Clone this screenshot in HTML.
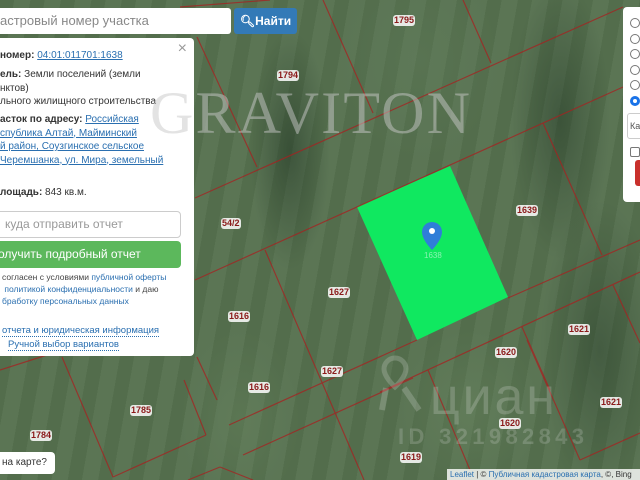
<!DOCTYPE html>
<html><head><meta charset="utf-8"><style>
*{box-sizing:border-box;margin:0;padding:0}
body{width:640px;height:480px;overflow:hidden;position:relative;font-family:"Liberation Sans",sans-serif;background:#4f6a4c}
.map{position:absolute;inset:0;background:
radial-gradient(ellipse 40px 120px at 290px 150px,rgba(25,45,30,.45),transparent),
radial-gradient(ellipse 50px 140px at 560px 120px,rgba(25,45,30,.4),transparent),
radial-gradient(ellipse 60px 90px at 240px 420px,rgba(110,140,100,.3),transparent),
radial-gradient(ellipse 70px 80px at 470px 410px,rgba(110,140,100,.3),transparent),
radial-gradient(ellipse 60px 150px at 600px 350px,rgba(25,45,30,.35),transparent),
radial-gradient(ellipse 80px 100px at 420px 60px,rgba(100,130,95,.3),transparent),
repeating-linear-gradient(100deg,rgba(0,0,0,.04) 0 14px,rgba(255,255,255,.03) 14px 30px),
#56714f}
.lbl{position:absolute;font-size:9px;color:#8b1a1a;background:rgba(255,255,255,.85);border-radius:3px;padding:0 1px;line-height:11px;font-weight:bold}
.panel{position:absolute;left:-10px;top:38px;width:204px;height:318px;background:#fff;border-radius:4px;font-size:10px;color:#333}
a{color:#2a6fb0;text-decoration:underline}
</style></head><body>
<div class="map"></div>
<svg style="position:absolute;left:0;top:0" width="640" height="480">
<polygon points="357,207 450,166 508,297 417,340" fill="#10e860"/>
<g stroke="#a82020" stroke-width="1.2" fill="none" opacity=".75">
<line x1="180" y1="7" x2="270" y2="0"/>
<line x1="197" y1="37" x2="257" y2="167"/>
<line x1="323" y1="0" x2="373" y2="113"/>
<line x1="463" y1="0" x2="491" y2="63"/>
<line x1="195" y1="198" x2="623" y2="7"/>
<line x1="195" y1="280" x2="623" y2="87"/>
<line x1="543" y1="123" x2="602" y2="255"/>
<line x1="508" y1="298" x2="640" y2="240"/>
<line x1="380" y1="392" x2="640" y2="272"/>
<line x1="522" y1="327" x2="550" y2="390"/>
<line x1="613" y1="285" x2="640" y2="343"/>
<line x1="265" y1="250" x2="364" y2="480"/>
<line x1="229" y1="425" x2="417" y2="340"/>
<line x1="243" y1="455" x2="413" y2="378"/>
<line x1="428" y1="370" x2="470" y2="470"/>
<line x1="527" y1="340" x2="580" y2="460"/>
<line x1="580" y1="460" x2="640" y2="433"/>
<line x1="197" y1="357" x2="217" y2="400"/>
<line x1="184" y1="380" x2="206" y2="435"/>
<line x1="62" y1="357" x2="113" y2="477"/>
<line x1="113" y1="477" x2="206" y2="435"/>
<line x1="0" y1="370" x2="47" y2="355"/>
<line x1="188" y1="480" x2="220" y2="467"/>
<line x1="220" y1="467" x2="253" y2="480"/>
</g>
<path d="M432 222a10 10 0 0 1 10 10c0 8-10 18-10 18s-10-10-10-18a10 10 0 0 1 10-10z" fill="#2f7ed8"/>
<circle cx="432" cy="231" r="3" fill="#fff"/>
<text x="424" y="258" font-family="Liberation Sans" font-size="8" fill="rgba(255,255,255,.5)">1638</text>
</svg>
<div class="lbl" style="left:393px;top:15px">1795</div>
<div class="lbl" style="left:277px;top:70px">1794</div>
<div class="lbl" style="left:221px;top:218px">54/2</div>
<div class="lbl" style="left:516px;top:205px">1639</div>
<div class="lbl" style="left:328px;top:287px">1627</div>
<div class="lbl" style="left:228px;top:311px">1616</div>
<div class="lbl" style="left:321px;top:366px">1627</div>
<div class="lbl" style="left:495px;top:347px">1620</div>
<div class="lbl" style="left:499px;top:418px">1620</div>
<div class="lbl" style="left:568px;top:324px">1621</div>
<div class="lbl" style="left:600px;top:397px">1621</div>
<div class="lbl" style="left:248px;top:382px">1616</div>
<div class="lbl" style="left:130px;top:405px">1785</div>
<div class="lbl" style="left:30px;top:430px">1784</div>
<div class="lbl" style="left:400px;top:452px">1619</div>
<div class="lbl" style="left:628px;top:163px">164</div>

<div style="position:absolute;left:0;top:8px;width:231px;height:26px;background:#fff;border-radius:0 3px 3px 0;font-size:13px;color:#888;line-height:26px">астровый номер участка</div>
<div style="position:absolute;left:234px;top:8px;width:63px;height:26px;background:#337ab7;border-radius:3px;color:#fff;font-size:12px;font-weight:bold;line-height:26px;text-align:center">&#x1F50D;&#xFE0E;Найти</div>

<div class="panel">
<div style="position:absolute;right:7px;top:2px;font-size:16px;color:#999">×</div>
<div style="position:absolute;left:10px;top:11px;line-height:13px"><b>номер:</b> <a>04:01:011701:1638</a></div>
<div style="position:absolute;left:10px;top:30px;line-height:13.5px"><b>ель:</b> Земли поселений (земли<br>нктов)<br>льного жилищного строительства</div>
<div style="position:absolute;left:10px;top:75px;line-height:13.5px"><b>асток по адресу:</b> <a>Российская</a><br><a>спублика Алтай, Майминский</a><br><a>й район, Соузгинское сельское</a><br><a>Черемшанка, ул. Мира, земельный</a></div>
<div style="position:absolute;left:10px;top:149px"><b>лощадь:</b> 843 кв.м.</div>
<div style="position:absolute;left:4px;top:173px;width:187px;height:27px;border:1px solid #ccc;border-radius:4px;font-size:12px;color:#999;line-height:25px;padding-left:10px">куда отправить отчет</div>
<div style="position:absolute;left:4px;top:203px;width:187px;height:27px;background:#5cb85c;border-radius:4px;font-size:12px;color:#fff;line-height:27px;padding-left:4px">олучить подробный отчет</div>
<div style="position:absolute;left:12px;top:233px;font-size:8.5px;line-height:12px;color:#444">согласен с условиями <span style="color:#2a6fb0">публичной оферты</span><br>&nbsp;<span style="color:#2a6fb0">политикой конфиденциальности</span> и даю<br><span style="color:#2a6fb0">бработку персональных данных</span></div>
<div style="position:absolute;left:12px;top:287px;font-size:9.5px;color:#2a6fb0;border-bottom:1px dotted #2a6fb0">отчета и юридическая информация</div>
<div style="position:absolute;left:18px;top:301px;font-size:9.5px;color:#2a6fb0;border-bottom:1px dotted #2a6fb0">Ручной выбор вариантов</div>
</div>

<div style="position:absolute;left:-6px;top:452px;width:61px;height:22px;background:#fff;border-radius:4px;font-size:10px;color:#333;line-height:22px;padding-left:8px">на карте?</div>

<div style="position:absolute;left:623px;top:7px;width:20px;height:195px;background:#fff;border-radius:4px 0 0 4px">
<div style="position:absolute;left:7px;top:11px;width:10px;height:10px;border:1px solid #777;border-radius:50%"></div>
<div style="position:absolute;left:7px;top:27px;width:10px;height:10px;border:1px solid #777;border-radius:50%"></div>
<div style="position:absolute;left:7px;top:42px;width:10px;height:10px;border:1px solid #777;border-radius:50%"></div>
<div style="position:absolute;left:7px;top:58px;width:10px;height:10px;border:1px solid #777;border-radius:50%"></div>
<div style="position:absolute;left:7px;top:73px;width:10px;height:10px;border:1px solid #777;border-radius:50%"></div>
<div style="position:absolute;left:7px;top:89px;width:10px;height:10px;border:3px solid #1a73e8;border-radius:50%"></div>
<div style="position:absolute;left:4px;top:106px;width:20px;height:26px;border:1px solid #ccc;border-radius:3px;font-size:9px;line-height:24px;padding-left:2px;color:#555">Ка</div>
<div style="position:absolute;left:7px;top:140px;width:10px;height:10px;border:1px solid #777;border-radius:2px"></div>
<div style="position:absolute;left:12px;top:153px;width:10px;height:26px;background:#c9302c;border-radius:3px"></div>
</div>

<div style="position:absolute;left:447px;top:469px;width:193px;height:11px;background:rgba(255,255,255,.8);font-size:8px;line-height:11px;color:#333;padding-left:3px;white-space:nowrap;overflow:hidden"><span style="color:#2a6fb0">Leaflet</span> | © <span style="color:#2a6fb0">Публичная кадастровая карта</span>, ©, Bing</div>

<svg style="position:absolute;left:0;top:0" width="640" height="480">
<text x="150" y="133" font-family="Liberation Serif" font-size="60" textLength="320" lengthAdjust="spacing" fill="rgba(200,200,200,.5)">GRAVITON</text>
<text x="430" y="414" font-family="Liberation Sans" font-size="52" textLength="125" fill="rgba(230,230,230,.22)">циан</text>
<text x="398" y="444" font-family="Liberation Sans" font-size="22" font-weight="bold" textLength="186" fill="rgba(230,230,230,.2)">ID 321982843</text>
<path d="M395 358a11 11 0 0 1 11 11c0 8-11 18-11 18s-11-10-11-18a11 11 0 0 1 11-11z" fill="none" stroke="rgba(230,230,230,.22)" stroke-width="5"/>
<path d="M386 388l-4 22M404 388l15 22" stroke="rgba(230,230,230,.22)" stroke-width="6"/>
</svg>
</body></html>
